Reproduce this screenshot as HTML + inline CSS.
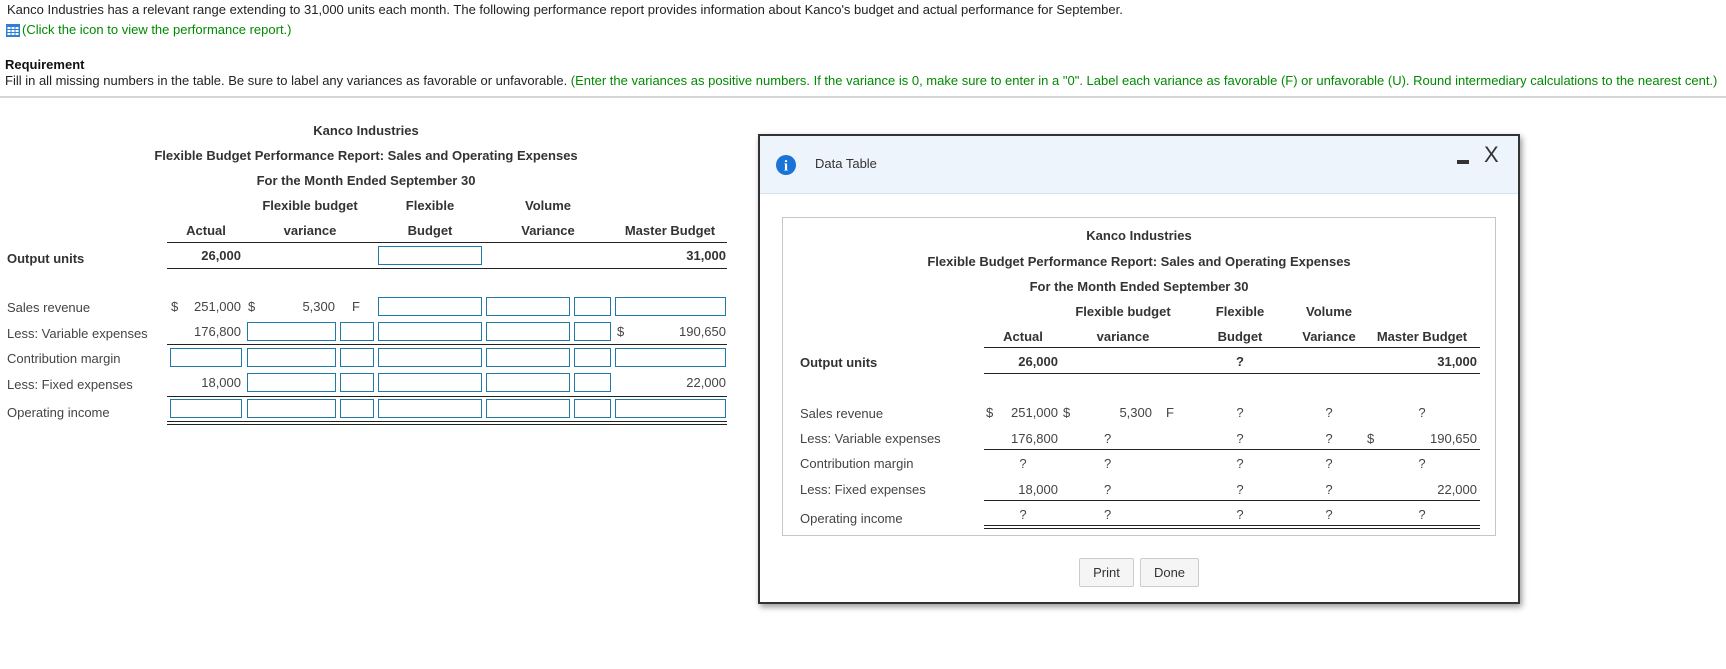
<!DOCTYPE html>
<html><head><meta charset="utf-8"><style>
body{margin:0;width:1726px;height:669px;background:#fff;font-family:"Liberation Sans",Arial,sans-serif;color:#222;position:relative;overflow:hidden}
.a{position:absolute;white-space:nowrap;font-size:13px;line-height:14px}
.b{font-weight:bold;color:#333}
.c{transform:translateX(-50%)}
.r{transform:translateX(-100%)}
.g{color:#008a00}
.box{position:absolute;height:19px;border:1px solid #1f7aa8;box-sizing:border-box;background:#fff}
.ln{position:absolute;height:0;border-top:1.5px solid #222}
.q{color:#444}
</style></head><body>
<div class="a" style="left:7px;top:3px">Kanco Industries has a relevant range extending to 31,000 units each month. The following performance report provides information about Kanco's budget and actual performance for September.</div>
<svg style="position:absolute;left:6px;top:24px" width="14" height="13" viewBox="0 0 14 13"><rect x="0" y="0" width="14" height="13" fill="#2f7fd6"/><g fill="#fff"><rect x="1.5" y="3" width="3" height="2"/><rect x="5.5" y="3" width="3" height="2"/><rect x="9.5" y="3" width="3" height="2"/><rect x="1.5" y="6" width="3" height="2"/><rect x="5.5" y="6" width="3" height="2"/><rect x="9.5" y="6" width="3" height="2"/><rect x="1.5" y="9" width="3" height="2"/><rect x="5.5" y="9" width="3" height="2"/><rect x="9.5" y="9" width="3" height="2"/></g></svg>
<div class="a g" style="left:22px;top:23px">(Click the icon to view the performance report.)</div>
<div class="a b" style="left:5px;top:58px;color:#111">Requirement</div>
<div class="a" style="left:5px;top:74px">Fill in all missing numbers in the table. Be sure to label any variances as favorable or unfavorable. <span class="g">(Enter the variances as positive numbers. If the variance is 0, make sure to enter in a "0". Label each variance as favorable (F) or unfavorable (U). Round intermediary calculations to the nearest cent.)</span></div>
<div style="position:absolute;left:0;top:96px;width:1726px;height:2px;background:#d6d6d6"></div>

<div class="a b c" style="left:366px;top:124px">Kanco Industries</div>
<div class="a b c" style="left:366px;top:149px">Flexible Budget Performance Report: Sales and Operating Expenses</div>
<div class="a b c" style="left:366px;top:174px">For the Month Ended September 30</div>
<div class="a b c" style="left:310px;top:199px">Flexible budget</div>
<div class="a b c" style="left:430px;top:199px">Flexible</div>
<div class="a b c" style="left:548px;top:199px">Volume</div>
<div class="a b c" style="left:206px;top:224px">Actual</div>
<div class="a b c" style="left:310px;top:224px">variance</div>
<div class="a b c" style="left:430px;top:224px">Budget</div>
<div class="a b c" style="left:548px;top:224px">Variance</div>
<div class="a b c" style="left:670px;top:224px">Master Budget</div>
<div class="ln" style="left:167px;width:560px;top:242px"></div>
<div class="a b" style="left:7px;top:252px">Output units</div>
<div class="a b r" style="left:241px;top:249px">26,000</div>
<div class="box" style="left:378px;width:104px;top:246px"></div>
<div class="a b r" style="left:726px;top:249px">31,000</div>
<div class="ln" style="left:167px;width:560px;top:268px"></div>

<div class="a" style="left:7px;top:301px;color:#444">Sales revenue</div>
<div class="a" style="left:7px;top:327px;color:#444">Less: Variable expenses</div>
<div class="a" style="left:7px;top:352px;color:#444">Contribution margin</div>
<div class="a" style="left:7px;top:378px;color:#444">Less: Fixed expenses</div>
<div class="a" style="left:7px;top:406px;color:#444">Operating income</div>

<div class="a" style="left:171px;top:300px;color:#444">$</div>
<div class="a r" style="left:241px;top:300px;color:#444">251,000</div>
<div class="a" style="left:248px;top:300px;color:#444">$</div>
<div class="a r" style="left:335px;top:300px;color:#444">5,300</div>
<div class="a" style="left:352px;top:300px;color:#444">F</div>
<div class="box" style="left:378px;width:104px;top:297px"></div>
<div class="box" style="left:486px;width:84px;top:297px"></div>
<div class="box" style="left:574px;width:37px;top:297px"></div>
<div class="box" style="left:615px;width:111px;top:297px"></div>

<div class="a r" style="left:241px;top:325px;color:#444">176,800</div>
<div class="box" style="left:247px;width:89px;top:322px"></div>
<div class="box" style="left:340px;width:34px;top:322px"></div>
<div class="box" style="left:378px;width:104px;top:322px"></div>
<div class="box" style="left:486px;width:84px;top:322px"></div>
<div class="box" style="left:574px;width:37px;top:322px"></div>
<div class="a" style="left:617px;top:325px;color:#444">$</div>
<div class="a r" style="left:726px;top:325px;color:#444">190,650</div>
<div class="ln" style="left:167px;width:560px;top:344px"></div>

<div class="box" style="left:170px;width:72px;top:348px"></div>
<div class="box" style="left:247px;width:89px;top:348px"></div>
<div class="box" style="left:340px;width:34px;top:348px"></div>
<div class="box" style="left:378px;width:104px;top:348px"></div>
<div class="box" style="left:486px;width:84px;top:348px"></div>
<div class="box" style="left:574px;width:37px;top:348px"></div>
<div class="box" style="left:615px;width:111px;top:348px"></div>

<div class="a r" style="left:241px;top:376px;color:#444">18,000</div>
<div class="box" style="left:247px;width:89px;top:373px"></div>
<div class="box" style="left:340px;width:34px;top:373px"></div>
<div class="box" style="left:378px;width:104px;top:373px"></div>
<div class="box" style="left:486px;width:84px;top:373px"></div>
<div class="box" style="left:574px;width:37px;top:373px"></div>
<div class="a r" style="left:726px;top:376px;color:#444">22,000</div>
<div class="ln" style="left:167px;width:560px;top:396px"></div>

<div class="box" style="left:170px;width:72px;top:399px"></div>
<div class="box" style="left:247px;width:89px;top:399px"></div>
<div class="box" style="left:340px;width:34px;top:399px"></div>
<div class="box" style="left:378px;width:104px;top:399px"></div>
<div class="box" style="left:486px;width:84px;top:399px"></div>
<div class="box" style="left:574px;width:37px;top:399px"></div>
<div class="box" style="left:615px;width:111px;top:399px"></div>
<div class="ln" style="left:167px;width:560px;top:421px;border-top-width:1px"></div>
<div class="ln" style="left:167px;width:560px;top:424px;border-top-width:1px"></div>

<div style="position:absolute;left:758px;top:134px;width:762px;height:470px;box-sizing:border-box;border:2px solid #333;background:#fff;box-shadow:2px 3px 6px rgba(0,0,0,.4)"></div>
<div style="position:absolute;left:760px;top:136px;width:758px;height:57px;background:#eef4fb;border-bottom:1px solid #d5e3f0"></div>
<svg style="position:absolute;left:776px;top:155px" width="20" height="20" viewBox="0 0 20 20"><circle cx="10" cy="10" r="10" fill="#1a73d6"/><text x="10" y="15.5" text-anchor="middle" font-family="Liberation Serif,serif" font-weight="bold" font-size="15" fill="#fff">i</text></svg>
<div class="a" style="left:815px;top:157px;font-size:13px;color:#333">Data Table</div>
<div style="position:absolute;left:1457px;top:160px;width:12px;height:4px;background:#333"></div>
<div class="a" style="left:1484px;top:143px;font-size:22px;line-height:24px;color:#333">X</div>
<div style="position:absolute;left:782px;top:217px;width:714px;height:319px;box-sizing:border-box;border:1px solid #c6c6c6"></div>

<div class="a b c" style="left:1139px;top:229px">Kanco Industries</div>
<div class="a b c" style="left:1139px;top:255px">Flexible Budget Performance Report: Sales and Operating Expenses</div>
<div class="a b c" style="left:1139px;top:280px">For the Month Ended September 30</div>
<div class="a b c" style="left:1123px;top:305px">Flexible budget</div>
<div class="a b c" style="left:1240px;top:305px">Flexible</div>
<div class="a b c" style="left:1329px;top:305px">Volume</div>
<div class="a b c" style="left:1023px;top:330px">Actual</div>
<div class="a b c" style="left:1123px;top:330px">variance</div>
<div class="a b c" style="left:1240px;top:330px">Budget</div>
<div class="a b c" style="left:1329px;top:330px">Variance</div>
<div class="a b c" style="left:1422px;top:330px">Master Budget</div>
<div class="ln" style="left:984px;width:496px;top:347px"></div>
<div class="a b" style="left:800px;top:356px">Output units</div>
<div class="a b r" style="left:1058px;top:355px">26,000</div>
<div class="a b c" style="left:1240px;top:355px">?</div>
<div class="a b r" style="left:1477px;top:355px">31,000</div>
<div class="ln" style="left:984px;width:496px;top:373px"></div>

<div class="a" style="left:800px;top:407px;color:#444">Sales revenue</div>
<div class="a" style="left:800px;top:432px;color:#444">Less: Variable expenses</div>
<div class="a" style="left:800px;top:457px;color:#444">Contribution margin</div>
<div class="a" style="left:800px;top:483px;color:#444">Less: Fixed expenses</div>
<div class="a" style="left:800px;top:512px;color:#444">Operating income</div>

<div class="a q" style="left:986px;top:406px">$</div><div class="a q r" style="left:1058px;top:406px">251,000</div><div class="a q" style="left:1063px;top:406px">$</div><div class="a q r" style="left:1152px;top:406px">5,300</div><div class="a q" style="left:1166px;top:406px">F</div>
<div class="a q c" style="left:1240px;top:406px">?</div><div class="a q c" style="left:1329px;top:406px">?</div><div class="a q c" style="left:1422px;top:406px">?</div>

<div class="a q r" style="left:1058px;top:432px">176,800</div><div class="a q" style="left:1104px;top:432px">?</div>
<div class="a q c" style="left:1240px;top:432px">?</div><div class="a q c" style="left:1329px;top:432px">?</div><div class="a q" style="left:1367px;top:432px">$</div><div class="a q r" style="left:1477px;top:432px">190,650</div>
<div class="ln" style="left:984px;width:496px;top:449px"></div>

<div class="a q c" style="left:1023px;top:457px">?</div><div class="a q" style="left:1104px;top:457px">?</div>
<div class="a q c" style="left:1240px;top:457px">?</div><div class="a q c" style="left:1329px;top:457px">?</div><div class="a q c" style="left:1422px;top:457px">?</div>

<div class="a q r" style="left:1058px;top:483px">18,000</div><div class="a q" style="left:1104px;top:483px">?</div>
<div class="a q c" style="left:1240px;top:483px">?</div><div class="a q c" style="left:1329px;top:483px">?</div><div class="a q r" style="left:1477px;top:483px">22,000</div>
<div class="ln" style="left:984px;width:496px;top:500px"></div>

<div class="a q c" style="left:1023px;top:508px">?</div><div class="a q" style="left:1104px;top:508px">?</div>
<div class="a q c" style="left:1240px;top:508px">?</div><div class="a q c" style="left:1329px;top:508px">?</div><div class="a q c" style="left:1422px;top:508px">?</div>
<div class="ln" style="left:984px;width:496px;top:525px;border-top-width:1px"></div>
<div class="ln" style="left:984px;width:496px;top:528px;border-top-width:1px"></div>

<div style="position:absolute;left:1079px;top:558px;width:55px;height:29px;box-sizing:border-box;border:1px solid #ccc;background:#f5f5f5;border-radius:2px;font-size:13px;line-height:27px;text-align:center;color:#333">Print</div>
<div style="position:absolute;left:1140px;top:558px;width:59px;height:29px;box-sizing:border-box;border:1px solid #ccc;background:#f5f5f5;border-radius:2px;font-size:13px;line-height:27px;text-align:center;color:#333">Done</div>
</body></html>
